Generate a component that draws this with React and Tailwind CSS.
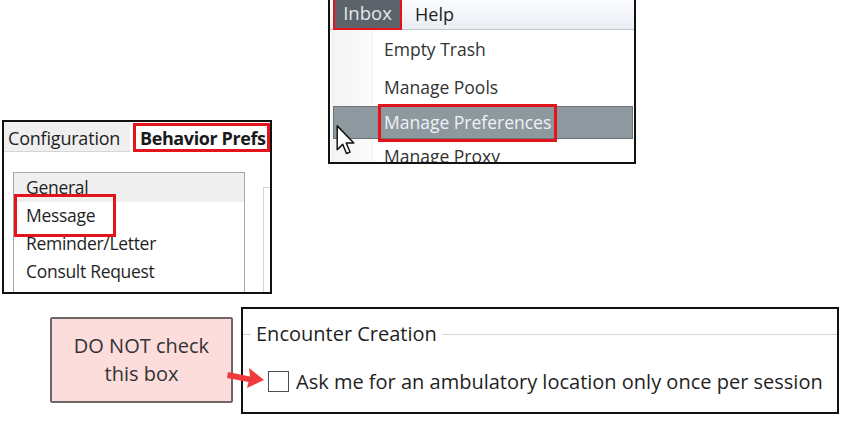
import React from "react";

const F = { fontFamily: '"Open Sans", "Noto Sans", sans-serif' };

function Cursor() {
  return (
    <svg
      className="absolute left-[336px] top-[125px]"
      width="19"
      height="30"
      viewBox="0 0 12.6 20.6"
    >
      <path
        d="M0.6 0.6 L0.6 17 L4.4 13.3 L7 19.6 L9.4 18.6 L6.8 12.4 L12 12.4 Z"
        fill="#ffffff"
        stroke="#111111"
        strokeWidth="1"
        strokeLinejoin="round"
      />
    </svg>
  );
}

function Arrow() {
  return (
    <svg
      className="absolute left-[226px] top-[364px]"
      width="40"
      height="26"
      viewBox="0 0 40 26"
    >
      <path
        d="M2 8 L24 12.5 L23 4 L38 16 L21 24 L22.5 18 L1 14 Z"
        fill="#ef3b3b"
      />
    </svg>
  );
}

function LeftPanel() {
  const items = ["General", "Message", "Reminder/Letter", "Consult Request"];
  return (
    <div className="ml-[2px] mt-[120px] w-[270px] h-[174px] border-2 border-[#111] bg-white overflow-hidden flex flex-col relative">
      <div className="h-[30px] flex items-stretch shrink-0">
        <div className="w-[126px] bg-[#efefef] border-b border-[#d6d6d6] flex items-center pl-[4px] pt-[2px] text-[18px] text-[#1f1f1f] leading-none tracking-[-0.2px]">
          Configuration
        </div>
        <div className="ml-[3px] flex-1 border-[3px] border-[#e3141c] mt-[1px] flex items-center pl-[4px] text-[18px] font-bold text-[#1a1a1a] leading-none tracking-[-0.4px]">
          Behavior Prefs
        </div>
      </div>
      <div className="flex-1 flex pt-[20px] pl-[9px]">
        <div className="w-[232px] h-[140px] border border-[#a8a8a8] border-b-0 flex flex-col">
          {items.map((t, i) => (
            <div
              key={t}
              className={`shrink-0 flex items-center pl-[12px] text-[17.5px] text-[#1f1f1f] leading-none tracking-[-0.3px] ${
                i === 0 ? "bg-[#efefef] h-[29px]" : "h-[28px]"
              }`}
            >
              {t}
            </div>
          ))}
        </div>
        <div className="ml-[18px] mt-[15px] flex-1 border-l border-t border-[#d4d4d4]" />
      </div>
      <div className="absolute left-[10px] top-[72px] w-[102px] h-[43px] border-[3px] border-[#e3141c]" />
    </div>
  );
}

function MenuPanel() {
  return (
    <div className="ml-[56px] w-[308px] h-[164px] border-2 border-t-0 border-[#111] bg-white overflow-hidden flex flex-col">
      <div className="h-[30px] shrink-0 bg-gradient-to-b from-[#fbfcfe] to-[#e9eef4] border-b border-[#bcc5ce] flex items-stretch">
        <div className="ml-[3px] w-[69px] h-[30px] bg-[#5c636a] border-2 border-t-0 border-[#e3141c] flex items-center justify-center text-[18.5px] text-[#e4e9ed] leading-none pb-[1px]">
          Inbox
        </div>
        <div className="ml-[13px] flex items-center text-[18px] text-[#222] leading-none pb-[1px]">
          Help
        </div>
      </div>
      <div className="flex-1 flex relative">
        <div className="w-[42px] ml-[1px] bg-gradient-to-r from-[#f4f4f4] to-[#fbfbfb] border-r border-[#f0f0f0]" />
        <div className="flex-1 flex flex-col">
          <div className="h-[40px] shrink-0 flex items-center pl-[11px] text-[17.5px] text-[#333] leading-none">
            Empty Trash
          </div>
          <div className="h-[36px] shrink-0 flex items-center pl-[11px] text-[17.5px] text-[#333] leading-none">
            Manage Pools
          </div>
          <div className="h-[33px] shrink-0" />
          <div className="h-[36px] shrink-0 flex items-center pl-[11px] text-[17.5px] text-[#333] leading-none">
            Manage Proxy
          </div>
        </div>
        <div className="absolute left-[3px] right-[1px] top-[76px] h-[33px] bg-[#8e989f] border border-[#6c747a]" />
        <div className="absolute left-[48px] top-[74px] h-[38px] px-[3px] border-[3px] border-[#e3141c] flex items-center text-[17.5px] text-[#eef2f5] leading-none">
          Manage Preferences
        </div>
      </div>
    </div>
  );
}

export default function App() {
  return (
    <div className="relative w-[864px] h-[427px] bg-white overflow-hidden" style={F}>
      <div className="flex items-start">
        <LeftPanel />
        <MenuPanel />
      </div>
      <div className="flex items-start">
        <div className="ml-[50px] mt-[23px] w-[183px] h-[86px] bg-[#fddcdc] border-2 border-[#6b6767] rounded-[2px] flex flex-col items-center justify-center text-[20px] text-[#333] leading-[28px]">
          <span>DO NOT check</span>
          <span>this box</span>
        </div>
        <div className="ml-[8px] mt-[13px] w-[598px] h-[107px] border-2 border-[#111] bg-white flex flex-col">
          <div className="mt-[12px] h-[26px] flex items-center">
            <div className="w-[8px] h-px bg-[#d6d6d6]" />
            <span className="px-[5px] text-[20px] text-[#1f1f1f] leading-none">
              Encounter Creation
            </span>
            <div className="flex-1 h-px bg-[#d6d6d6]" />
          </div>
          <div className="mt-[24px] flex items-center pl-[25px]">
            <div className="w-[21px] h-[21px] border-[1.5px] border-[#4e4e4e] bg-white" />
            <span className="ml-[7px] text-[20px] text-[#1f1f1f] leading-none">
              Ask me for an ambulatory location only once per session
            </span>
          </div>
        </div>
      </div>
      <Arrow />
      <Cursor />
    </div>
  );
}
